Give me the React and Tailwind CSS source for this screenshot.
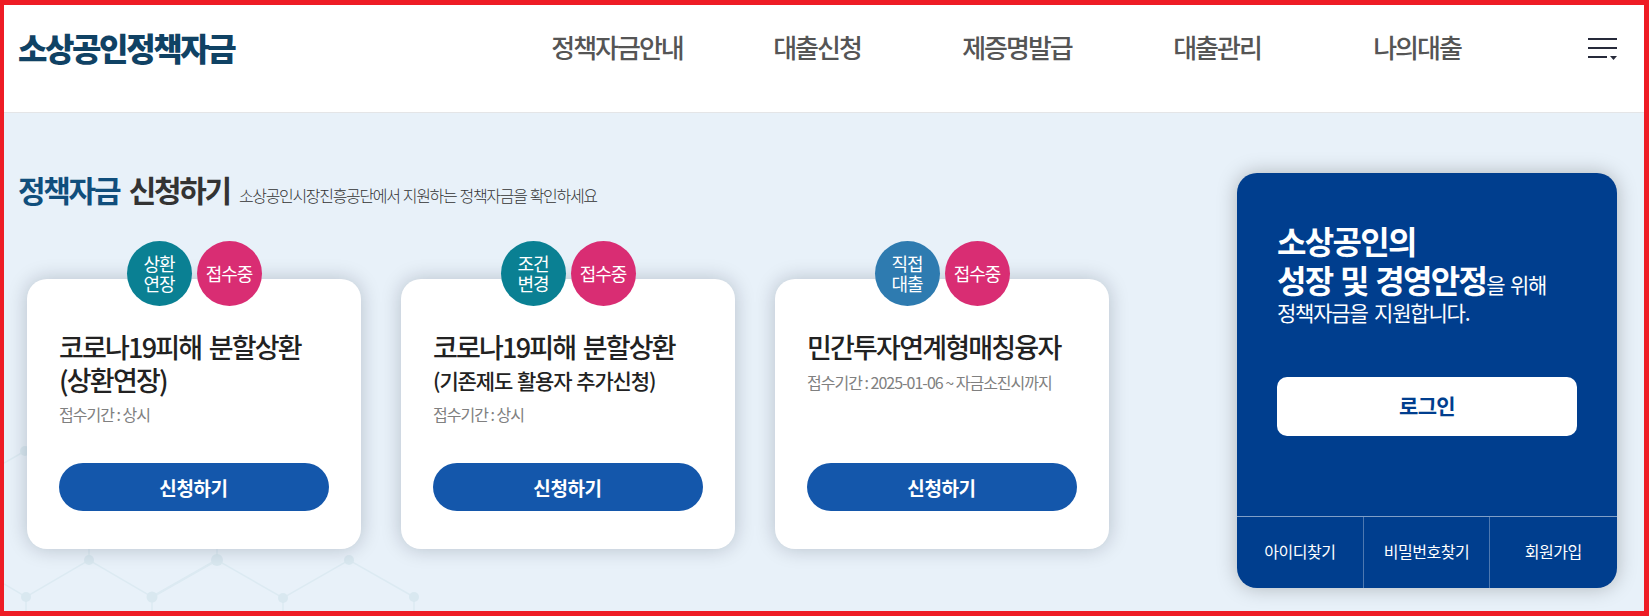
/**
 * App.jsx — 소상공인정책자금 메인 화면
 */

import React from "react";

const MENUS = ["정책자금안내", "대출신청", "제증명발급", "대출관리", "나의대출"];

const FUNDS = [
  {
    id: 1,
    badge: "상환\n연장",
    badgeBg: "bg-[#0a8093]",
    title: "코로나19피해 분할상환",
    sub: "(상환연장)",
    subStyle: "text-[27px] tracking-[-1.8px]",
    period: "상시",
    periodStyle: "mt-[2px]",
  },
  {
    id: 2,
    badge: "조건\n변경",
    badgeBg: "bg-[#0a8093]",
    title: "코로나19피해 분할상환",
    sub: "(기존제도 활용자 추가신청)",
    subStyle: "pt-px -mb-px text-[21px] tracking-[-1.1px] [word-spacing:1px]",
    period: "상시",
    periodStyle: "mt-[2px]",
  },
  {
    id: 3,
    badge: "직접\n대출",
    badgeBg: "bg-[#2e7bb0]",
    title: "민간투자연계형매칭융자",
    period: "2025-01-06 ~ 자금소진시까지",
    periodStyle: "mt-[3px]",
  },
];

const LINKS = ["아이디찾기", "비밀번호찾기", "회원가입"];

const NODES = [
  [25, 451, 5], [89, 560, 5], [26, 597, 5], [152, 597, 5.5],
  [217, 560, 6], [283, 598, 5], [349, 560, 5], [414, 597, 5],
];

function MenuIcon() {
  return (
    <svg width="29" height="22" viewBox="0 0 29 22" fill="#262a3a" shapeRendering="crispEdges">
      <rect width="29" height="2" />
      <rect y="9" width="29" height="2" />
      <rect y="18" width="19" height="2" />
      <path d="M22 18h7l-3.5 4z" shapeRendering="auto" />
    </svg>
  );
}

// 배경 육각형 패턴
function HexPattern() {
  return (
    <svg
      className="absolute top-0 left-0"
      width="440" height="498" viewBox="4 113 440 498"
      fill="none" stroke="#dceaf2" strokeWidth="1.5"
    >
      <path d="M4 463L25 451M4 584L26 597L89 560L152 597L217 560L283 598L349 560L414 597" />
      <path d="M26 597V611M152 597V611M283 598V611M414 597V611M89 560V540M217 560V540" />
      <path d="M152 597L217 560" strokeWidth="2.5" />
      {NODES.map(([x, y, r]) => (
        <circle key={`${x}-${y}`} cx={x} cy={y} r={r} fill="#d9e8f0" stroke="none" />
      ))}
    </svg>
  );
}

function FundCard({ fund }) {
  return (
    <div className="relative flex h-[270px] w-[334px] flex-col rounded-[20px] bg-white px-8 pt-[51px] pb-[38px] shadow-[0_0_20px_rgba(0,20,40,0.22)]">
      {/* 배지 */}
      <div className="absolute -top-[38px] left-[100px] flex gap-[5px] text-center text-[18px] leading-5 tracking-[-1px] text-white">
        <div className={`flex size-[65px] items-center justify-center rounded-full pr-px pb-[2px] whitespace-pre-line ${fund.badgeBg}`}>
          {fund.badge}
        </div>
        <div className="flex size-[65px] items-center justify-center rounded-full bg-[#d92d73] pr-px pb-px">
          접수중
        </div>
      </div>

      <h3 className="text-[27px] leading-[33px] font-medium tracking-[-1.8px] whitespace-nowrap text-[#222] [word-spacing:3px]">
        {fund.title}
      </h3>
      {fund.sub && (
        <p className={`leading-[33px] font-medium whitespace-nowrap text-[#222] ${fund.subStyle}`}>
          {fund.sub}
        </p>
      )}
      <p className={`text-[16px] leading-8 tracking-[-1px] whitespace-nowrap text-[#808080] ${fund.periodStyle}`}>
        접수기간 : {fund.period}
      </p>
      <button className="mt-auto h-12 w-full shrink-0 rounded-full bg-[#1457ab] pr-px text-[19px] leading-none font-bold tracking-[-0.4px] text-white">
        신청하기
      </button>
    </div>
  );
}

function LoginPanel() {
  return (
    <div className="relative mt-[60px] mr-[27px] ml-auto flex h-[415px] w-[380px] flex-col rounded-[20px] bg-[#003e8e] text-white shadow-[0_0_20px_rgba(0,0,0,0.25)]">
      <div className="px-10 pt-[48px]">
        <p className="text-[32px] leading-[39px] font-bold tracking-[-1.7px] whitespace-nowrap [word-spacing:2px]">
          소상공인의<br />
          성장 및 경영안정
          <span className="text-[21px] leading-none font-normal tracking-[-1.2px]">을 위해</span>
        </p>
        <p className="text-[21px] leading-[27px] tracking-[-1.2px] [word-spacing:3px]">
          정책자금을 지원합니다.
        </p>
        <button className="mt-[51px] h-[59px] w-full rounded-[10px] bg-white pb-[2px] text-[21px] leading-none font-bold tracking-[-0.7px] text-[#003e8e]">
          로그인
        </button>
      </div>
      <div className="mt-auto flex h-[72px] border-t border-white/50 pr-px">
        {LINKS.map((t, i) => (
          <a
            key={t}
            className={`flex flex-1 items-center justify-center pb-[3px] text-[16px] tracking-[-0.5px] ${i > 0 ? "border-l border-white/30" : ""}`}
          >
            {t}
          </a>
        ))}
      </div>
    </div>
  );
}

export default function App() {
  return (
    <div className="h-[616px] w-[1650px] bg-white pr-px font-['Noto_Sans_CJK_KR',sans-serif]">
      <div className="flex h-full flex-col overflow-hidden border-[5px] border-l-4 border-[#ee1c25]">
        {/* 헤더 */}
        <header className="flex h-[108px] shrink-0 items-start border-b border-[#e4e5e7] bg-white pt-[21px] pr-[27px] pl-[14px]">
          <h1 className="w-[499px] text-[32px] leading-[43px] font-black tracking-[-2.4px] text-[#104264]">
            소상공인정책자금
          </h1>
          <nav className="flex text-[26px] leading-[42px] font-medium tracking-[-2px] text-[#555]">
            {MENUS.map((m) => (
              <a key={m} className="w-[200px] text-center">{m}</a>
            ))}
          </nav>
          <button className="mt-3 ml-auto"><MenuIcon /></button>
        </header>

        <main className="relative flex flex-1 bg-[#e8f1f9]">
          <HexPattern />
          <section className="relative">
            <div className="flex items-baseline pt-[55px] pl-[14px] whitespace-nowrap">
              <h2 className="text-[30px] leading-[42px] font-bold tracking-[-2.3px] text-[#333] [word-spacing:5px]">
                <span className="text-[#104e7c]">정책자금</span> 신청하기
              </h2>
              <p className="ml-[9px] text-[16px] font-light tracking-[-1.33px] text-[#333] [word-spacing:1px]">
                소상공인시장진흥공단에서 지원하는 정책자금을 확인하세요
              </p>
            </div>
            <div className="mt-[69px] flex gap-10 pl-[23px]">
              {FUNDS.map((f) => <FundCard key={f.id} fund={f} />)}
            </div>
          </section>
          <LoginPanel />
        </main>
      </div>
    </div>
  );
}
